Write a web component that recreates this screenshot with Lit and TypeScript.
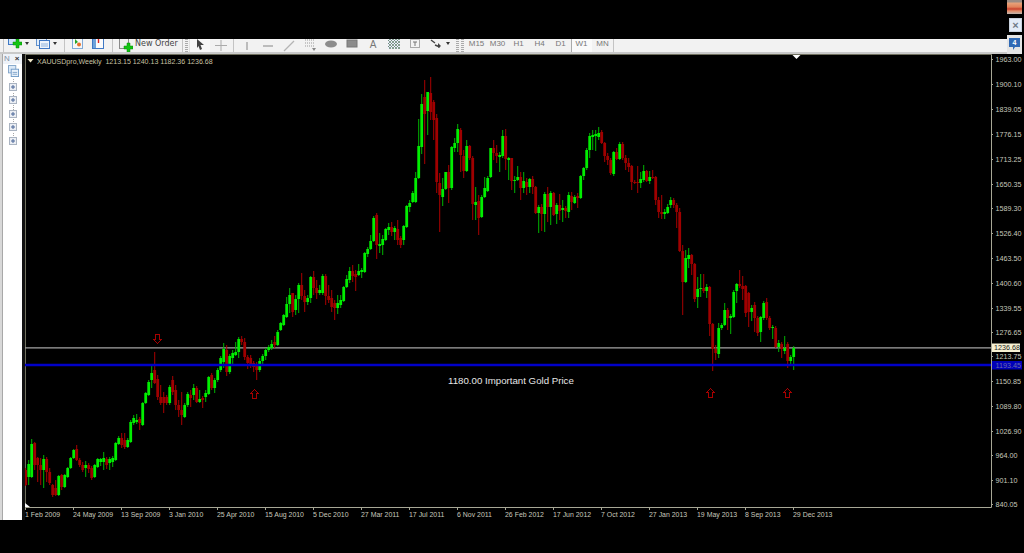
import { LitElement, html, css, svg } from 'lit';
import { customElement } from 'lit/decorators.js';

// one weekly bar per token: colour + body top, body bottom, high, low (all in screen px)
const BARS = `
r470,485,468,486 g464,477,460,485 g444,477,439,478 r443,465,442,470 r458,465,457,482 r465,470,458,485 g459,470,455,488
r459,472,457,482 r472,483,468,485 r485,495,484,497 r488,495,480,496 g476,495,475,496 r475,487,474,490 g475,487,474,488
g468,477,467,478 g458,468,457,469 g450,458,449,459 r449,460,445,461 r460,465,458,467 r465,470,462,472 g465,468,461,477
r465,469,463,473 r468,478,466,480 g465,477,464,478 g459,467,458,468 g459,462,458,466 g458,462,452,470 r459,465,457,469
g459,463,457,470 g458,462,456,467 g443,460,442,461 g438,444,436,445 r438,445,433,448 r440,447,433,449 g440,447,438,448
g422,442,420,443 g418,423,415,425 g420,422,414,424 r419,423,417,430 g403,425,402,426 g393,403,392,404 g382,395,380,396
g373,380,364,388 r370,383,352,384 r379,397,375,400 r397,403,385,405 r397,403,392,413 r397,403,395,405 g387,403,385,405
r380,392,376,395 r390,405,385,410 r405,410,400,417 r410,415,392,425 g405,417,403,418 g394,405,392,407 r395,398,390,407
g388,395,384,400 r388,402,386,403 g399,402,390,403 r398,400,396,408 g393,397,390,402 g377,394,376,395 r375,388,373,390
g380,388,378,393 g370,380,368,382 g358,370,356,372 g349,362,343,368 r350,372,345,376 g356,372,354,374 g353,358,350,364
g352,355,342,356 g339,352,337,358 r339,342,336,345 r342,357,338,360 r357,363,355,369 r358,365,355,368 r363,367,361,372
r365,370,362,380 g361,370,358,372 g356,361,354,364 g350,356,348,360 g347,350,345,352 g344,348,340,350 r342,345,336,348
g332,345,330,346 g323,330,322,331 g315,325,314,326 g304,317,297,318 g295,304,288,313 r293,312,293,317 g299,310,295,315
g285,299,283,313 r285,296,273,300 r296,302,290,312 g298,302,295,305 g277,298,276,303 r277,288,271,295 r288,293,280,299
g290,293,285,295 g276,293,274,295 r276,296,274,305 r296,300,285,303 r298,307,290,312 r303,308,300,320 g303,308,295,314
g300,305,295,308 g287,301,286,302 g279,287,275,288 g271,280,267,283 r271,276,265,282 r274,277,270,291 g271,275,264,276
g270,272,268,278 g253,272,252,273 g249,254,247,257 g241,249,235,250 g218,241,216,242 r215,245,213,259 g244,246,233,253
g239,245,235,255 g229,240,228,241 g227,230,223,235 r227,232,222,236 g228,232,226,240 r229,240,220,245 r238,245,236,248
g226,240,225,245 g206,227,205,228 g203,207,200,212 g193,202,191,203 g178,202,172,203 g146,178,119,179 g104,147,94,154
r97,114,80,164 g92,111,92,135 r93,112,77,120 r102,120,100,140 r118,182,114,193 r183,195,173,232 g189,197,178,206
g172,189,172,190 r172,188,165,203 g147,188,146,190 g143,148,138,152 g129,143,124,152 r130,155,128,172 r156,171,150,178
g146,171,140,172 r146,158,145,160 r158,204,156,220 g202,205,187,220 r201,218,195,235 g197,217,195,218 g188,197,177,198
g178,191,176,192 g148,177,148,178 r148,153,140,160 r153,156,145,163 g155,157,152,172 g136,156,130,158 r136,159,129,170
g158,160,157,180 r158,181,158,190 g180,181,176,193 g177,180,166,181 r177,188,172,200 g181,188,172,193 r182,187,178,195
g179,187,178,193 r179,187,176,194 r187,213,186,214 g207,213,205,233 r207,214,204,231 g194,214,192,232 r194,207,187,222
g193,207,191,225 r193,215,192,216 g205,214,203,224 r205,211,194,220 g208,210,200,222 r208,211,206,218 g195,212,192,218
r196,202,192,210 g197,203,195,204 r196,198,193,208 g176,198,175,199 g168,176,167,180 g150,168,148,170 g136,150,133,158
g135,137,130,150 g134,136,130,151 g133,137,127,140 r132,143,130,144 r143,156,142,162 r156,160,153,165 r160,173,158,175
g152,174,151,176 r152,159,148,160 g144,159,142,160 r144,158,142,160 r158,163,155,170 r163,167,158,172 r166,182,165,190
r182,183,180,184 r182,183,166,193 g179,183,172,188 g171,180,165,182 r171,181,170,182 g177,181,171,184 r177,178,170,179
r177,200,176,205 r200,212,197,218 r212,214,195,219 g212,214,209,219 g207,213,204,214 g200,205,197,208 r200,205,198,208
r205,212,203,228 r212,251,208,252 r251,282,245,315 g258,282,250,283 g255,259,248,268 r255,264,254,275 r264,299,263,302
g289,297,277,308 g288,289,274,297 r288,291,274,293 g287,291,284,298 r287,324,286,336 r324,349,323,371 r349,353,345,360
g328,354,323,358 g325,328,323,330 g310,325,303,326 r310,318,308,330 g316,318,314,334 g292,317,290,318 g284,291,283,303
r284,286,270,288 r286,289,276,300 r286,313,285,317 r293,312,292,327 g308,312,305,321 r305,318,302,332 r318,333,316,336
g317,332,316,342 g303,318,301,320 r302,318,298,320 r318,328,316,330 g327,328,325,339 r328,347,326,348 g343,347,340,352
r344,349,342,358 g348,351,336,354 r344,361,342,368 g357,361,355,366 g348,357,346,370`
  .trim()
  .split(/\s+/)
  .map((t) => {
    const [top, bottom, high, low] = t.slice(1).split(',').map(Number);
    return { up: t[0] === 'g', top, bottom, high, low };
  });

const PRICES: [string, number][] = [
  ['1963.00', 59], ['1900.10', 84], ['1839.05', 109], ['1776.15', 134], ['1713.25', 159],
  ['1650.35', 184], ['1589.30', 208], ['1526.40', 233], ['1463.50', 258], ['1400.60', 283],
  ['1339.55', 308], ['1276.65', 332], ['1213.75', 356], ['1150.85', 381], ['1089.80', 406],
  ['1026.90', 431], ['964.00', 455], ['901.10', 480], ['840.05', 504],
];

const DATES = [
  '1 Feb 2009', '24 May 2009', '13 Sep 2009', '3 Jan 2010', '25 Apr 2010', '15 Aug 2010',
  '5 Dec 2010', '27 Mar 2011', '17 Jul 2011', '6 Nov 2011', '26 Feb 2012', '17 Jun 2012',
  '7 Oct 2012', '27 Jan 2013', '19 May 2013', '8 Sep 2013', '29 Dec 2013',
];

const plusDoc = (stroke: string, fill: string) => html`
  <svg width="14" height="17" viewBox="0 0 14 17">
    <rect x=".5" y=".5" width="9" height="11" fill=${fill} stroke=${stroke} />
    <path d="M5 9h3V6h3v3h3v3h-3v3H8v-3H5z" fill="#12c412" stroke="#0a8a0a" stroke-width=".5" />
  </svg>`;

const caret = html`<span class="caret"></span>`;
const sep = (cls: string) => html`<span class="sep ${cls}"></span>`;
const grip = (cls: string) => html`<span class="grip ${cls}"></span>`;

const TOOLS = [
  svg`<path d="M7 3v8" stroke="#aaa" stroke-width="1.5"/>`,
  svg`<path d="M2 7h10" stroke="#aaa" stroke-width="1.5"/>`,
  svg`<path d="M2 12l10-10" stroke="#b4b4b4" stroke-width="1.2"/>`,
  svg`<path d="M2 1h10M2 4h10M2 7h10" stroke="#999" stroke-dasharray="1 1"/><path d="M9 9h4l-2 3z" fill="#888"/>`,
  svg`<ellipse cx="7" cy="5" rx="6" ry="3.5" fill="#8c8c8c"/>`,
  svg`<rect x="2" y="1" width="10" height="7" fill="#8c8c8c" stroke="#777"/>`,
  svg`<text x="7" y="9" text-anchor="middle" font-family="Liberation Sans" font-size="10" fill="#777">A</text>`,
  svg`<rect x="1" y="0" width="12" height="10" fill="url(#hatch)"/>`,
  svg`<rect x="2.5" y="0.5" width="9" height="8" fill="#f4f4f4" stroke="#aaa"/><path d="M5 3h4M7 3v4" stroke="#777"/>`,
  svg`<path d="M2 1l4 3M6 6l5 2" stroke="#444" stroke-width="1.4"/><path d="M9 4l3 3-3 2z" fill="#444"/>`,
];

@customElement('nav-tree')
class NavTree extends LitElement {
  static styles = css`
    :host {
      display: flex;
      flex-direction: column;
      width: 25px;
      height: 100%;
      box-sizing: border-box;
      background: #fff;
      border-left: 2px solid #d8d8d8;
      border-right: 3px solid #111;
      box-shadow: inset 1px 0 0 #a8a8a8;
      font-family: 'Liberation Sans', sans-serif;
    }
    .head {
      display: flex;
      height: 10px;
      align-items: center;
      margin: 0 0 1px 1px;
      padding: 0 2px 0 1px;
      gap: 3px;
      background: #eef2f8;
      font-size: 8px;
      line-height: 10px;
      color: #7f8fa4;
    }
    .head b {
      margin-left: 2px;
      color: #333;
      font-size: 8px;
    }
    .tree {
      display: flex;
      flex-direction: column;
      align-items: center;
      width: 20px;
      height: 81px;
      padding-left: 1px;
      background: repeating-linear-gradient(#a6a6a6 0 1px, transparent 1px 2px) 11px 0 / 1px 100% no-repeat;
    }
    .root {
      display: block;
      height: 13px;
      background: #fff;
    }
    .node {
      display: block;
      margin-top: 4.55px;
      background: #fff;
      height: 9px;
    }
  `;

  render() {
    return html`
      <div class="head"><span>N</span><b>×</b></div>
      <div class="tree">
        <svg class="root" width="11" height="13" viewBox="0 0 12 14">
          <rect x=".5" y=".5" width="8" height="8" fill="#dbe9f7" stroke="#7fa3c8" />
          <rect x="3.5" y="4.5" width="8" height="8" fill="#e9f2fb" stroke="#6f9ac6" />
          <path d="M5 8h5M5 10h5" stroke="#7fa3c8" />
        </svg>
        ${[0, 1, 2, 3, 4].map(
          () => html`<svg class="node" width="8" height="9" viewBox="0 0 8 9">
            <rect x=".5" y=".5" width="7" height="7" fill="#eceff4" stroke="#aab4c2" />
            <path d="M2 4h4M4 2v4" stroke="#4a6698" />
          </svg>`
        )}
      </div>
    `;
  }
}

@customElement('price-chart')
class PriceChart extends LitElement {
  static styles = css`
    :host {
      display: block;
      flex: 1;
      height: 100%;
    }
    svg {
      display: block;
      width: 100%;
      height: 100%;
      font-family: 'Liberation Sans', sans-serif;
    }
    .label {
      font-size: 7.2px;
      fill: #c8c8bc;
    }
    .date {
      font-size: 6.95px;
      fill: #c8c8bc;
    }
    .label.dark {
      fill: #222;
    }
    .label.dim {
      fill: #6c6ca8;
    }
    .legend {
      font-size: 7.05px;
      fill: #c8c2a4;
      white-space: pre;
    }
    .note {
      font-size: 9.7px;
      fill: #e6e6e6;
    }
    .frame {
      stroke: #6f6f5e;
      fill: none;
    }
    .axis {
      stroke: #a7a796;
      fill: none;
    }
    .mark {
      fill: none;
      stroke: #a80000;
      shape-rendering: crispEdges;
    }
  `;

  private bar(b: (typeof BARS)[number], i: number) {
    const x = 25.7 + 3 * i;
    const wick = b.up ? '#00b400' : '#a80000';
    const body = b.up ? '#00ee00' : '#a00000';
    return svg`
      <rect x=${x - 0.5} y=${b.high} width="1" height=${b.low - b.high} fill=${wick} />
      <rect x=${x - 1.4} y=${b.top} width="2.8" height=${Math.max(b.bottom - b.top, 1)} fill=${body} />
    `;
  }

  // x,y is the tip of the arrow
  private arrow(x: number, y: number, down: boolean) {
    const s = down ? -1 : 1;
    const d = `M${x + 0.5} ${y + 0.5}l4 ${4 * s}h-2v${5 * s}h-4v${-5 * s}h-2z`;
    return svg`<path class="mark" d=${d} />`;
  }

  render() {
    return html`
      <svg viewBox="25 54 999 466">
        <rect x="25" y="54" width="999" height="466" fill="#000" />
        <path class="frame" d="M25 54.5H992" />
        <path class="frame" d="M25.5 54V507" />
        <path d="M792.5 55h8l-4 4z" fill="#fff" />

        <path d="M27.5 59h6l-3 3.5z" fill="#f0e8c8" />
        <text class="legend" x="37" y="63.5">XAUUSDpro,Weekly  1213.15 1240.13 1182.36 1236.68</text>

        <path d="M25 347.9H991" stroke="#a4a4a4" stroke-width="1.4" />
        ${BARS.map((b, i) => this.bar(b, i))}
        <path d="M25 365H991" stroke="#0000c8" stroke-width="2.4" />

        ${this.arrow(157, 343, true)}
        ${this.arrow(254, 389, false)}
        ${this.arrow(710, 388, false)}
        ${this.arrow(787, 388, false)}
        <text class="note" x="448" y="383.5">1180.00 Important Gold Price</text>

        <path class="axis" d="M991.5 55V507.5H25" />
        <path d="M25 507l5 0l-5-4z" fill="#fff" />
        ${PRICES.map(
          ([text, y]) => svg`
            <path class="axis" d="M991 ${y + 0.5}h2" />
            <text class="label" x="995.5" y=${y + 2.7}>${text}</text>`
        )}
        <rect x="992" y="343.5" width="28" height="8.5" fill="#f6f1d2" />
        <text class="label dark" x="994" y="350.4">1236.68</text>
        <rect x="992" y="361" width="30" height="8.5" fill="#0000b8" />
        <text class="label dim" x="995.5" y="367.8">1193.45</text>

        ${DATES.map(
          (d, i) => svg`
            <path class="axis" d="M${25.5 + 48 * i} 507v3" />
            <text class="date" x=${25 + 48 * i} y="517">${d}</text>`
        )}
      </svg>
    `;
  }
}

@customElement('app-root')
export class AppRoot extends LitElement {
  static styles = css`
    :host {
      display: flex;
      flex-direction: column;
      width: 1024px;
      height: 553px;
      background: #000;
      overflow: hidden;
      font-family: 'Liberation Sans', sans-serif;
    }
    .top {
      display: flex;
      height: 54px;
    }
    .bar-col {
      display: flex;
      flex-direction: column;
      justify-content: flex-end;
      width: 1007px;
    }
    .toolbar {
      display: flex;
      align-items: flex-end;
      box-sizing: border-box;
      height: 15px;
      padding: 0 0 2px 3px;
      overflow: hidden;
      background: linear-gradient(#f2f2f2 0 13px, #c9c9c9 13px);
      color: #6a6a6a;
    }
    .btn {
      display: flex;
      flex: none;
      width: 14px;
      height: 13px;
      align-items: flex-end;
      margin-bottom: 2px;
    }
    .caret {
      flex: none;
      width: 10px;
      height: 13px;
      position: relative;
    }
    .caret::after {
      content: '';
      position: absolute;
      left: 3px;
      top: 3px;
      border: 2px solid transparent;
      border-top: 3px solid #333;
    }
    .caret.small {
      width: 6px;
    }
    .caret.small::after {
      left: 0;
    }
    .sep {
      flex: none;
      width: 1px;
      height: 13px;
      background: #c4c4c4;
    }
    .grip {
      flex: none;
      width: 3px;
      height: 13px;
      background: repeating-linear-gradient(#aaa 0 1px, transparent 1px 2px);
    }
    .order {
      display: flex;
      flex: none;
      width: 61px;
      height: 13px;
      gap: 2px;
      align-items: flex-end;
      overflow: hidden;
      font-family: 'DejaVu Sans', sans-serif;
      font-size: 8px;
      line-height: 10px;
      color: #444;
    }
    .order svg {
      flex: none;
      margin-bottom: -2px;
    }
    .order span {
      align-self: flex-start;
      font-weight: 500;
      white-space: nowrap;
    }
    .tool {
      display: flex;
      flex: none;
      justify-content: center;
      align-items: center;
      width: 21px;
      height: 13px;
    }
    .tool.on {
      background: #f8f8f8;
      box-shadow: inset 1px 0 0 #e0e0e0;
    }
    .tf {
      display: flex;
      flex: none;
      justify-content: center;
      width: 21px;
      height: 13px;
      line-height: 10px;
      font-size: 8px;
      color: #777;
    }
    .tf.on {
      background: #fafafa;
      box-shadow: inset 1px 0 0 #aaa;
    }
    .m1 { margin-left: 1px; }
    .m2 { margin-left: 2px; }
    .m4 { margin-left: 4px; }
    .m6 { margin-left: 6px; }
    .m7 { margin-left: 7px; }
    .corner {
      display: flex;
      flex-direction: column;
      width: 15px;
    }
    .win {
      flex: none;
      height: 14px;
      background: linear-gradient(#9a8b84 0 2px, #e7a27a 3px, #e2825a 7px, #c8402c 9px, #e58f6c 11px, #bdb4ae 14px);
    }
    .close {
      flex: none;
      display: flex;
      justify-content: center;
      align-items: center;
      box-sizing: border-box;
      width: 13px;
      height: 14px;
      margin: 4px 0 0 2px;
      background: #e3ebf7;
      border: 1px solid #c9d2de;
      color: #6f7a88;
      font-size: 11px;
      font-weight: bold;
      line-height: 1;
    }
    .msg {
      flex: none;
      display: flex;
      justify-content: center;
      align-items: flex-start;
      height: 20px;
      margin-top: 2px;
      background: linear-gradient(#000 0 1px, #e4e4e4 1px);
    }
    .msg svg {
      margin-top: 4px;
    }
    .msg-num {
      font-size: 7px;
      font-weight: bold;
      fill: #fff;
    }
    .main {
      display: flex;
      height: 466px;
    }
  `;

  render() {
    return html`
      <div class="top">
        <div class="bar-col">
          <div class="toolbar">
            ${sep('')}
            <span class="btn m4">${plusDoc('#3f78c4', '#cfe3f7')}</span>${caret}
            <span class="btn m4">
              <svg width="14" height="13" viewBox="0 0 14 13">
                <rect x=".5" y=".5" width="10" height="8" fill="#e4eef9" stroke="#5f8fcc" />
                <rect x="3.5" y="3.5" width="10" height="8" fill="#eef4fb" stroke="#3f78c4" />
                <path d="M5 7h7M5 9h7" stroke="#8fb2dc" />
              </svg>
            </span>${caret}
            ${sep('m4')}
            <span class="btn m6">
              <svg width="14" height="13" viewBox="0 0 14 13">
                <rect x="1.5" y=".5" width="10" height="11" fill="#f6f6f6" stroke="#7fa9d6" />
                <path d="M4 2l3 3-3 2z" fill="#25a525" /><circle cx="8" cy="7.5" r="2" fill="#e8722a" />
              </svg>
            </span>
            <span class="btn m6">
              <svg width="14" height="13" viewBox="0 0 14 13">
                <rect x="1.5" y=".5" width="11" height="11" fill="#fbfbfb" stroke="#3f78c4" />
                <rect x="2" y="1" width="3" height="10" fill="#6fa2da" />
                <path d="M7.5 2v4" stroke="#d22" stroke-width="1.4" />
              </svg>
            </span>
            ${sep('m7')}
            <span class="order m6">${plusDoc('#8a8a8a', '#eeeeee')}<span>New Order</span></span>
            ${sep('m2')}
            ${grip('m2')}
            <span class="tool on m1">
              <svg width="14" height="13" viewBox="0 0 14 13"><path d="M4 0l7 6H7.5l1.5 4-2 1-1.5-4L4 9z" fill="#444" /></svg>
            </span>
            <span class="tool">
              <svg width="14" height="13" viewBox="0 0 14 13"><path d="M1 6.5h12M7 1v11" stroke="#aaa" /></svg>
            </span>
            ${sep('m2')}
            <span class="m2"></span>
            <svg width="0" height="0">
              <defs>
                <pattern id="hatch" width="3" height="3" patternUnits="userSpaceOnUse">
                  <rect width="3" height="3" fill="#eef" /><path d="M0 0l3 3M3 0l-3 3" stroke="#6a8a72" stroke-width=".8" />
                </pattern>
              </defs>
            </svg>
            ${TOOLS.map(
              (t) => html`<span class="tool"><svg width="14" height="13" viewBox="0 0 14 13">${t}</svg></span>`
            )}
            <span class="caret small"></span>
            ${grip('m4')}${grip('m2')}
            <span class="m2"></span>
            ${['M15', 'M30', 'H1', 'H4', 'D1', 'W1', 'MN'].map(
              (t) => html`<span class="tf ${t === 'W1' ? 'on' : ''}">${t}</span>`
            )}
            ${sep('')}
          </div>
        </div>
        <div class="corner">
          <div class="win"></div>
          <div class="close">×</div>
          <div class="msg">
            <svg width="13" height="13" viewBox="0 0 13 13">
              <path d="M1 0h11v9H7l-2 3V9H1z" fill="#2f69b5" />
              <text class="msg-num" x="6.5" y="7" text-anchor="middle">4</text>
            </svg>
          </div>
        </div>
      </div>
      <div class="main">
        <nav-tree></nav-tree>
        <price-chart></price-chart>
      </div>
    `;
  }
}
